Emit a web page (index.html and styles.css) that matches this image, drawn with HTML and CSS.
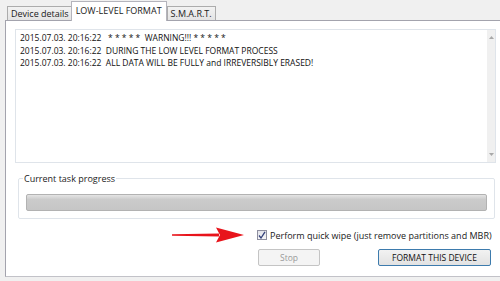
FILE: index.html
```html
<!DOCTYPE html>
<html>
<head>
	<title>Low-level format</title>
	<meta charset="utf-8">
	<link rel="stylesheet" href="styles.css">
</head>
<body>
    <div class="tabs">
        <div class="tab">Device details</div>
        <div class="tab active">LOW-LEVEL FORMAT</div>
        <div class="tab">S.M.A.R.T.</div>
    </div>

    <div class="panel">
        <div class="log">
            <div class="log-text">2015.07.03. 20:16:22   * * * * *  WARNING!!! * * * * *
2015.07.03. 20:16:22  DURING THE LOW LEVEL FORMAT PROCESS
2015.07.03. 20:16:22  ALL DATA WILL BE FULLY and IRREVERSIBLY ERASED!</div>
            <div class="scrollbar">
                <svg width="7" height="5" viewBox="0 0 7 5"><path d="M1 4 L3.5 1 L6 4 Z" fill="#a8a8a8"/></svg>
                <svg width="7" height="5" viewBox="0 0 7 5"><path d="M1 1 L3.5 4 L6 1 Z" fill="#a8a8a8"/></svg>
            </div>
        </div>

        <fieldset class="group">
            <legend>Current task progress</legend>
            <div class="progress"></div>
        </fieldset>

        <div class="options">
            <svg class="arrow" width="72" height="16" viewBox="0 0 72 16">
                <path d="M0 7.3 L47 6.4 L47 9.6 L0 8.7 Z" fill="#e8141b"/>
                <path d="M44 0.5 L72 8 L44 15.5 L48 8 Z" fill="#e8141b"/>
            </svg>
            <span class="check">
                <svg width="8" height="8" viewBox="0 0 8 8"><path d="M1 4.5 L3 7 L7 0.8" fill="none" stroke="#33407a" stroke-width="1.3"/></svg>
            </span>
            <span class="check-label">Perform quick wipe (just remove partitions and MBR)</span>
        </div>

        <div class="buttons">
            <button class="btn disabled">Stop</button>
            <button class="btn primary">FORMAT THIS DEVICE</button>
        </div>
    </div>
</body>
</html>
```

FILE: styles.css
```css
body {
    margin: 0;
    background-color: #f0f0f0;
    font-family: "Open Sans", "Noto Sans", sans-serif;
    font-size: 8.5px;
    color: #111;
    width: 500px;
    height: 281px;
    overflow: hidden;
}
.tabs {
    display: flex;
    align-items: flex-end;
    height: 20px;
    padding-left: 7px;
    font-size: 9px;
}
.tab {
    height: 13px;
    line-height: 13px;
    padding: 0 3px;
    border: 1px solid #acacac;
    border-bottom: none;
    background: linear-gradient(#f2f2f2, #e4e4e4);
    margin-right: -1px;
    color: #1a1a1a;
}
.tab.active {
    height: 19px;
    line-height: 17px;
    padding: 0 4px;
    background: #fff;
    margin: 0 0 -1px -1px;
    position: relative;
    border-color: #b4b4bc;
}
.panel {
    margin-left: 5px;
    width: 500px;
    height: 255px;
    background: #fff;
    border: 1px solid #a3a3ad;
    border-bottom-color: #c2c2c8;
}
.log {
    display: flex;
    margin: 8px 0 0 9px;
    width: 479px;
    height: 132px;
    border: 1px solid #dfe4ea;
}
.log-text {
    flex: 1;
    white-space: pre;
    padding: 2px 4px;
    line-height: 12.5px;
}
.scrollbar {
    width: 8px;
    background: #f0f0f0;
    display: flex;
    flex-direction: column;
    justify-content: space-between;
    align-items: center;
    padding: 5px 0 5px;
}
.group {
    margin: 10px 0 0 12px;
    width: 461px;
    padding: 10px 7px 7px 7px;
    border: 1px solid #dfe4ea;
    border-radius: 2px;
}
.group legend {
    padding: 0 1px;
    margin-left: -3px;
    color: #222;
    line-height: 11px;
    font-size: 9px;
}
.progress {
    height: 15px;
    border: 1px solid #b2b2b2;
    border-radius: 2px;
    background: linear-gradient(#e4e4e4, #cbcbcb 30%, #c6c6c6);
}
.options {
    display: flex;
    align-items: center;
    margin: 9px 0 0 166px;
    height: 14px;
}
.arrow {
    margin-right: 13px;
}
.check {
    width: 8px;
    height: 8px;
    border: 1px solid #8e8f9f;
    background: linear-gradient(#e2e3ea, #f6f6f8);
    display: flex;
    align-items: center;
    justify-content: center;
    margin-right: 3px;
}
.check-label {
    color: #1a1a1a;
    font-size: 9px;
}
.buttons {
    display: flex;
    margin: 7px 0 0 252px;
    gap: 58px;
}
.btn {
    height: 17px;
    font-family: "Open Sans", "Noto Sans", sans-serif;
    font-size: 8.5px;
    border-radius: 2px;
    padding: 0;
}
.btn.disabled {
    width: 62px;
    border: 1px solid #c4c4c4;
    background: #f4f4f4;
    color: #9a9a9a;
}
.btn.primary {
    width: 113px;
    border: 1px solid #3d7bad;
    background: linear-gradient(#f2f2f2, #e2e2e2);
    color: #111;
}
```
